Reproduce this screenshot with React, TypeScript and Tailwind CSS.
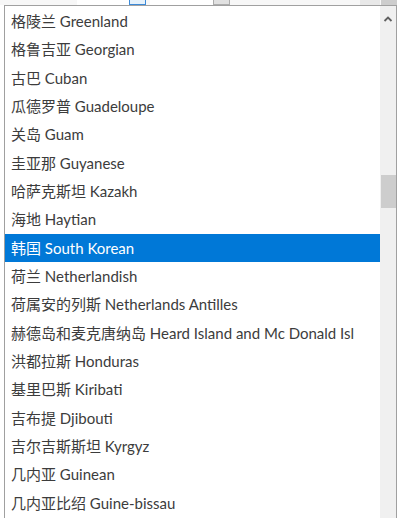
import React from 'react';

const items = [
  '格陵兰 Greenland',
  '格鲁吉亚 Georgian',
  '古巴 Cuban',
  '瓜德罗普 Guadeloupe',
  '关岛 Guam',
  '圭亚那 Guyanese',
  '哈萨克斯坦 Kazakh',
  '海地 Haytian',
  '韩国 South Korean',
  '荷兰 Netherlandish',
  '荷属安的列斯 Netherlands Antilles',
  '赫德岛和麦克唐纳岛 Heard Island and Mc Donald Isl',
  '洪都拉斯 Honduras',
  '基里巴斯 Kiribati',
  '吉布提 Djibouti',
  '吉尔吉斯斯坦 Kyrgyz',
  '几内亚 Guinean',
  '几内亚比绍 Guine-bissau',
];

const SELECTED = 8;

export default function App() {
  return (
    <div
      className="w-[397px] h-[518px] overflow-hidden bg-white flex flex-col"
      style={{ fontFamily: 'Lato, "Noto Sans CJK SC", sans-serif' }}
    >
      {/* page strip behind the open list */}
      <div className="h-[5px] flex shrink-0 bg-[#f7f7f7]">
        <div className="w-[77px]" />
        <div className="w-[69px] bg-white flex justify-end">
          <div className="w-[17px] h-[5px] border border-t-0 border-[#3c8ad8] bg-[#e5f1fb]" />
        </div>
        <div className="w-[4px]" />
        <div className="w-[63px] bg-white" />
        <div className="w-[17px] bg-[#e1e1e1] border-x border-b border-[#adadad]" />
        <div className="w-[130px]" />
        <div className="w-[20px] bg-[#e8e8e8]" />
        <div className="w-[1px]" />
        <div className="w-[16px] bg-[#cdcdcd]" />
      </div>

      <div className="flex flex-1 min-h-0 ml-[4px]">
        <div className="flex flex-1 min-h-0 border-l border-t border-r border-[#a0a0a0]">
          <div className="flex-1 min-w-0 pt-[1px] bg-white">
            {items.map((label, i) => (
              <div
                key={label}
                className={`h-[28.35px] flex items-center pl-[6px] text-[15px] whitespace-nowrap ${
                  i === SELECTED ? 'bg-[#0078d7] text-white' : 'text-[#3c3c3c]'
                }`}
              >
                {label}
              </div>
            ))}
          </div>
          <div className="w-[16px] bg-[#f0f0f0] flex flex-col items-center">
            <svg width="10" height="8" viewBox="0 0 10 8" className="mt-[9px]">
              <path d="M1.5 6 L5 2.5 L8.5 6" stroke="#606060" strokeWidth="1.8" fill="none" />
            </svg>
            <div className="mt-[152px] w-[15px] h-[33px] bg-[#cdcdcd]" />
          </div>
        </div>
      </div>
    </div>
  );
}
